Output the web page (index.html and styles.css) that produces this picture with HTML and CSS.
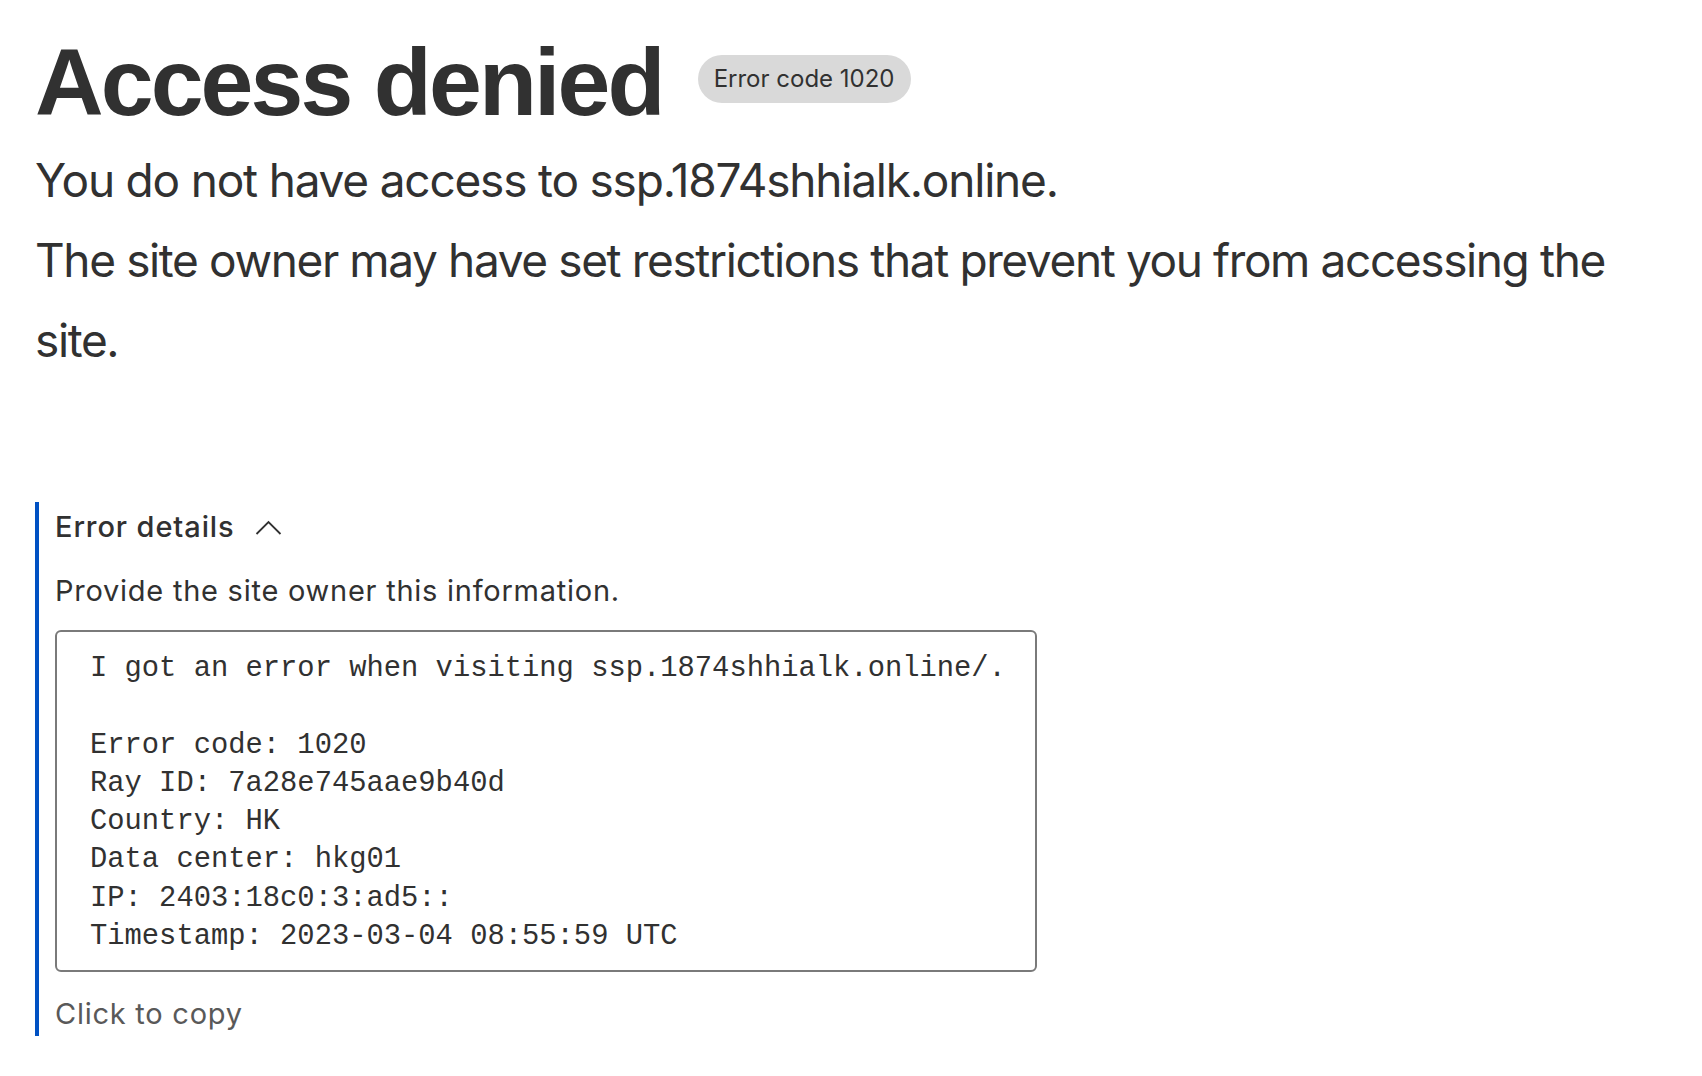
FILE: index.html
```html
<!DOCTYPE html>
<html lang="en">
<head>
<meta charset="utf-8">
<title>Access denied | ssp.1874shhialk.online used Cloudflare to restrict access</title>
<link rel="stylesheet" href="styles.css">
</head>
<body>
<main class="page">
  <h1 class="title"><span class="title-text">Access denied</span><span class="code-label">Error code 1020</span></h1>
  <h2 class="subtitle">You do not have access to ssp.1874shhialk.online.</h2>
  <p class="lead">The site owner may have set restrictions that prevent you from accessing the site.</p>
  <section class="details">
    <div class="details-head">
      <span>Error details</span>
      <svg class="chevron" width="27" height="15" viewBox="0 0 27 15" aria-hidden="true"><polyline points="1.5,14 13.5,2 25.5,14" fill="none" stroke="#313131" stroke-width="1.8"/></svg>
    </div>
    <p class="details-info">Provide the site owner this information.</p>
    <pre class="code-box">I got an error when visiting ssp.1874shhialk.online/.

Error code: 1020
Ray ID: 7a28e745aae9b40d
Country: HK
Data center: hkg01
IP: 2403:18c0:3:ad5::
Timestamp: 2023-03-04 08:55:59 UTC</pre>
    <p class="copy">Click to copy</p>
  </section>
</main>
</body>
</html>
```
FILE: styles.css
```css
* { box-sizing: border-box; }
html, body { margin: 0; padding: 0; background: #fff; }
body {
  color: #313131;
  font-family: Inter, "Noto Sans", sans-serif;
}
.page {
  padding: 35px 42px 0 35px;
}
.title {
  display: flex;
  align-items: flex-start;
  gap: 35px;
  margin: 0;
  font-family: "Liberation Sans", Arial, sans-serif;
  font-weight: 700;
  font-size: 95px;
  line-height: 95px;
  letter-spacing: -2.9px;
}
.code-label {
  display: inline-flex;
  align-items: center;
  height: 48px;
  margin-top: 20px;
  padding: 0 16px;
  border-radius: 24px;
  background: #d9d9d9;
  color: #313131;
  font-family: Inter, "Noto Sans", sans-serif;
  font-weight: 400;
  font-size: 24px;
  line-height: 1;
  letter-spacing: 0;
}
.subtitle {
  margin: 10px 0 0 0;
  font-weight: 400;
  font-size: 46px;
  line-height: 80px;
  letter-spacing: -1.2px;
}
.lead {
  margin: 0;
  font-size: 46px;
  line-height: 80px;
  letter-spacing: -1.38px;
}
.details {
  margin-top: 122px;
  padding: 5px 0 0 16px;
  border-left: 4px solid #0051c3;
}
.details-head {
  display: flex;
  align-items: center;
  gap: 20px;
  font-size: 29px;
  font-weight: 500;
  line-height: 40px;
  letter-spacing: 0.9px;
}
.details-info {
  margin: 26px 0 21px 0;
  font-size: 29px;
  line-height: 36px;
  letter-spacing: 0.75px;
}
.code-box {
  display: inline-block;
  margin: 0;
  padding: 18px 29px 14px 33px;
  border: 2px solid #7a7a7a;
  border-radius: 6px;
  font-family: "Liberation Mono", "Courier New", monospace;
  font-size: 28.8px;
  line-height: 38.3px;
  color: #313131;
}
.copy {
  margin: 20px 0 0 0;
  font-size: 29px;
  line-height: 44px;
  letter-spacing: 0.75px;
  color: #595959;
}
```
